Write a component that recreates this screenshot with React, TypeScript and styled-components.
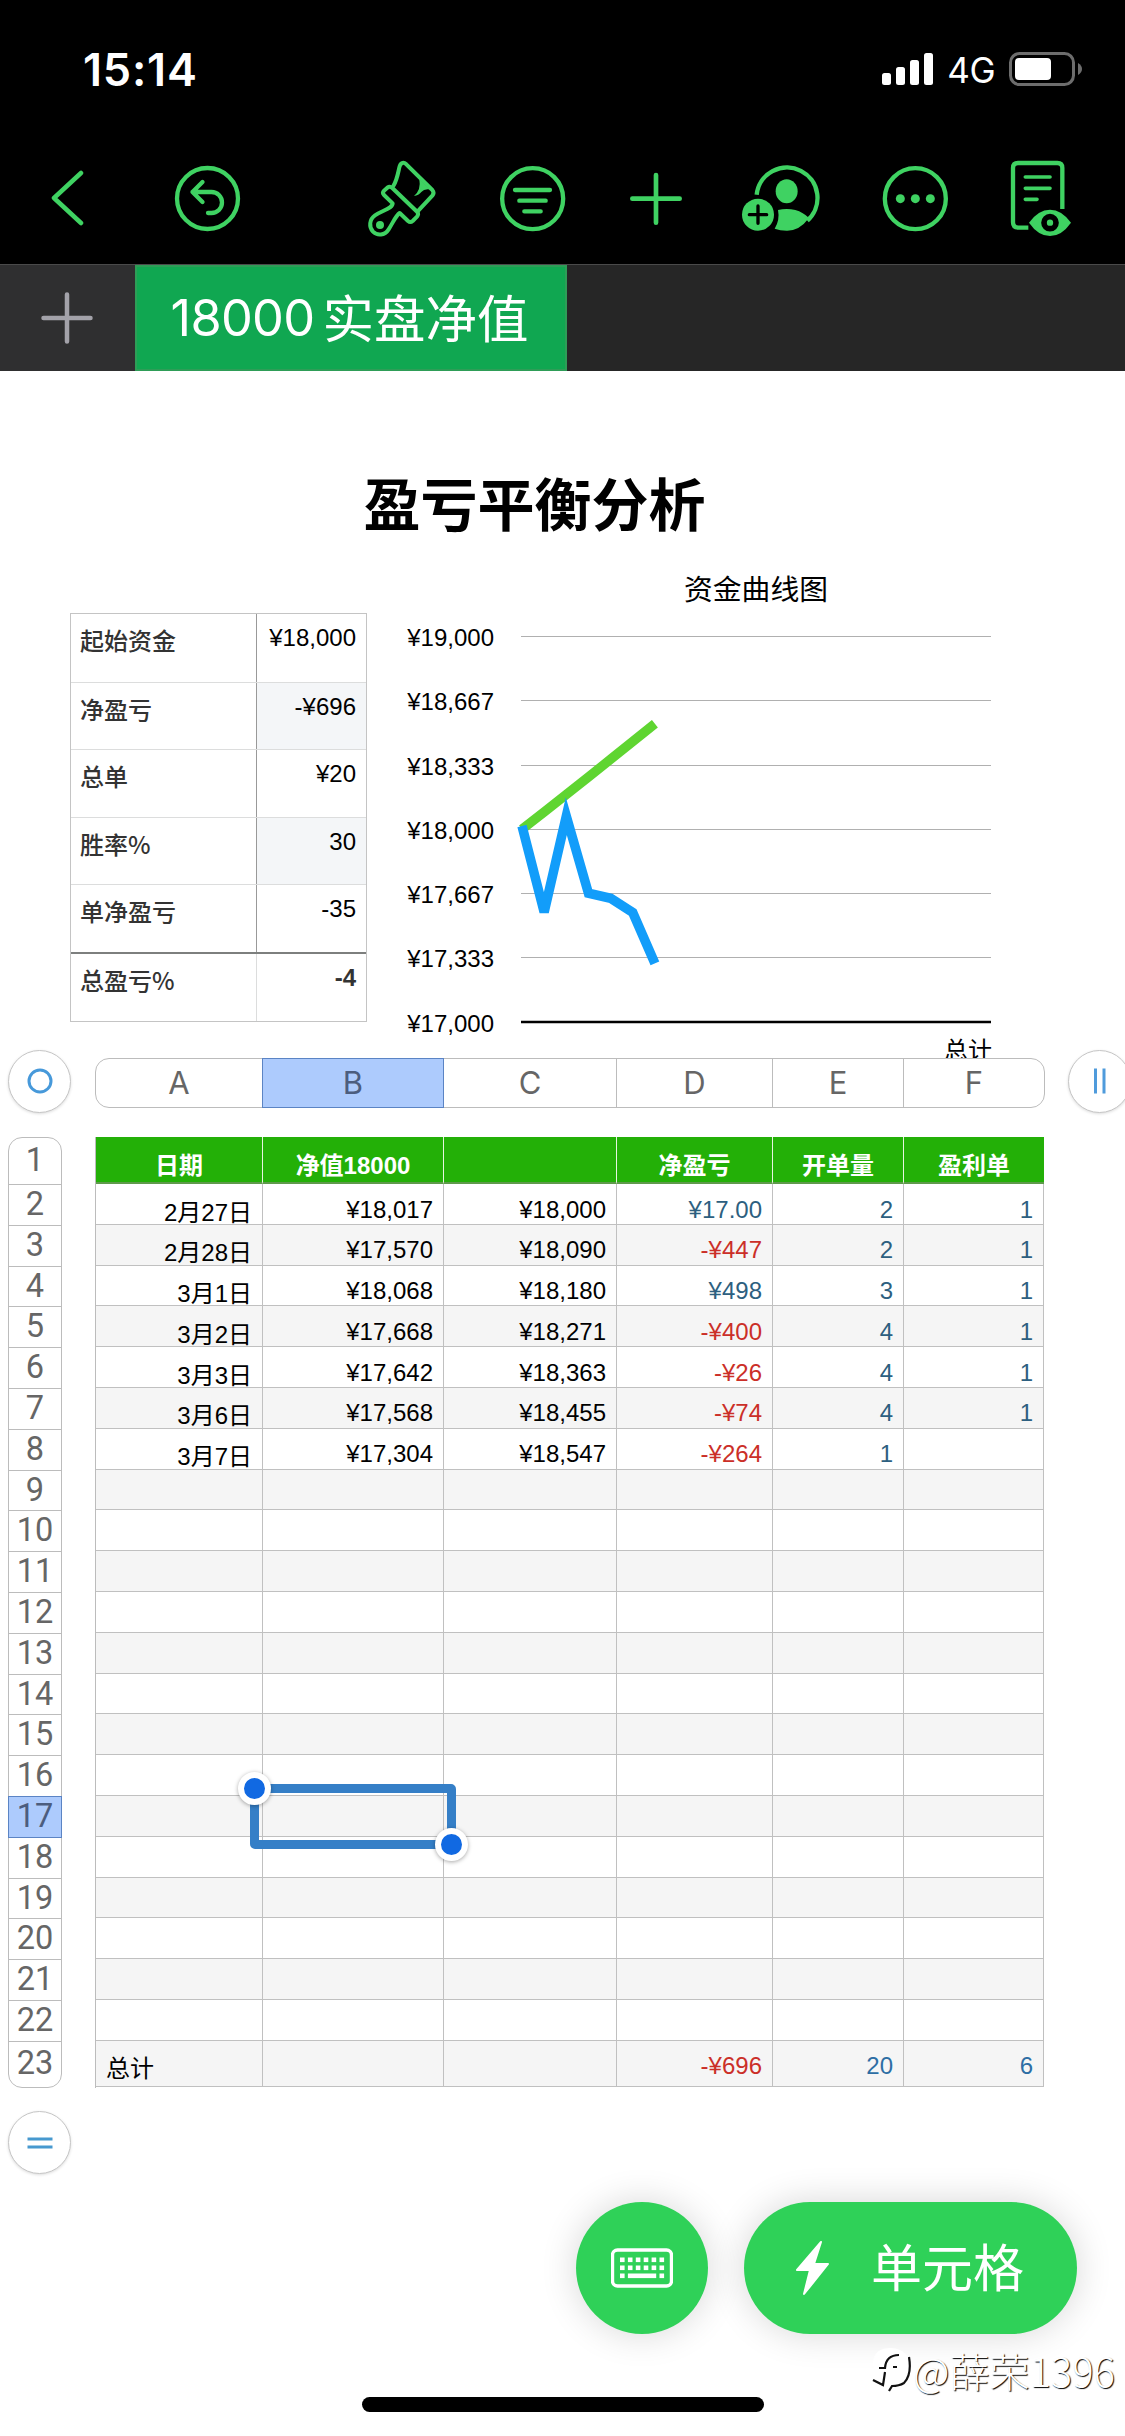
import React from 'react'
import styled, { createGlobalStyle } from 'styled-components'

const GREEN = '#3fd262'

const GlobalStyle = createGlobalStyle`
  * {
    box-sizing: border-box;
  }
  body {
    margin: 0;
    background: #fff;
  }
`

const Screen = styled.div`
  position: relative;
  display: flex;
  flex-direction: column;
  width: 1125px;
  height: 2436px;
  overflow: hidden;
  background: #fff;
  color: #000;
  font-family: 'Liberation Sans', 'Noto Sans CJK SC', sans-serif;
`

const StatusBar = styled.div`
  display: flex;
  align-items: center;
  justify-content: space-between;
  height: 138px;
  padding: 0 42px 0 83px;
  background: #000;
  color: #fff;
  font-family: Inter, sans-serif;
`

const Clock = styled.div`
  font-size: 45px;
  font-weight: 600;
  letter-spacing: 0.8px;
`

const StatusRight = styled.div`
  display: flex;
  align-items: center;
`

const Network = styled.span`
  margin: 2px 14px 0 13px;
  font-size: 35px;
  line-height: 35px;
  letter-spacing: -0.5px;
`

const Toolbar = styled.div`
  display: flex;
  align-items: center;
  height: 126px;
  padding: 0 0 6px 50px;
  background: #000;
`

const ToolButton = styled.button<{ offset?: number }>`
  display: flex;
  flex: none;
  margin: 0 0 0 ${({ offset }) => offset || 0}px;
  padding: 0;
  border: none;
  background: transparent;
  color: ${GREEN};
  & > svg {
    fill: none;
    stroke: currentColor;
    stroke-linecap: round;
    stroke-linejoin: round;
  }
`

const TabBar = styled.div`
  display: flex;
  height: 107px;
  border-top: 1px solid #4a4a4a;
  background: #262626;
`

const AddTab = styled.button`
  display: flex;
  align-items: center;
  justify-content: center;
  width: 135px;
  padding: 0 2px 0 0;
  border: none;
  background: #2f2f30;
`

const Tab = styled.div`
  display: flex;
  align-items: center;
  justify-content: center;
  width: 432px;
  border: 2px solid #2e9d57;
  background: #10a751;
  color: #fff;
  font-family: 'Noto Sans CJK SC', sans-serif;
  font-size: 51.5px;
  line-height: 98px;
  white-space: nowrap;
`

const TabDigits = styled.span`
  margin: 0 8px 0 -3px;
  font-family: Inter, sans-serif;
  font-size: 50.5px;
  font-weight: 400;
  letter-spacing: -0.7px;
`

const TabName = styled.span`
  margin-top: -4px;
`

const Title = styled.h1`
  margin: 100px 0 0;
  padding-right: 56px;
  font-family: 'Noto Sans CJK SC', sans-serif;
  font-size: 57px;
  font-weight: 700;
  line-height: 61px;
  text-align: center;
`

const Overview = styled.section`
  display: flex;
  height: 526.5px;
  padding-top: 2px;
  overflow: hidden;
`

const Summary = styled.div`
  width: 297px;
  height: 409px;
  margin: 79px 0 0 70px;
  border: 1px solid #c4c4c4;
`

const SummaryRow = styled.div<{ total?: boolean }>`
  display: flex;
  height: ${({ total }) => (total ? '69px' : '67.5px')};
  border-top: ${({ total }) => (total ? '2px solid #7d7f7e' : '1px solid #dcdddd')};
  font-weight: ${({ total }) => (total ? 700 : 400)};
  color: ${({ total }) => (total ? '#333' : '#000')};
  &:first-child {
    border-top: none;
  }
`

const SummaryLabel = styled.div<{ total?: boolean }>`
  width: 186px;
  padding: 8px 0 0 9px;
  border-right: 1px solid ${({ total }) => (total ? '#dcdddd' : '#999')};
  color: #333;
  font-family: 'Noto Sans CJK SC', sans-serif;
  font-size: 24px;
  font-weight: 500;
  line-height: 36px;
`

const SummaryValue = styled.div<{ shaded?: boolean }>`
  flex: 1;
  padding: 6px 10px 0 0;
  background: ${({ shaded }) => (shaded ? '#f4f6f8' : 'transparent')};
  font-size: 24px;
  line-height: 36px;
  text-align: right;
`

const Chart = styled.svg`
  flex: none;
  margin: 26px 0 0 33px;
  & text {
    font-family: 'Liberation Sans', 'Noto Sans CJK SC', sans-serif;
    font-size: 24px;
  }
`

const ColumnBar = styled.div`
  display: flex;
  align-items: center;
  height: 62px;
  margin-top: -8.5px;
  padding-left: 8px;
`

const RoundHandle = styled.button`
  position: relative;
  display: flex;
  flex: none;
  align-items: center;
  justify-content: center;
  width: 63px;
  height: 63px;
  padding: 0;
  border: 1px solid #c6c6c6;
  border-radius: 50%;
  background: #fff;
  box-shadow: 0 1px 3px rgba(0, 0, 0, 0.14);
`

const ColumnLetters = styled.div`
  display: flex;
  flex: none;
  width: 950px;
  height: 50px;
  margin: 3px 23px 0 24px;
  position: relative;
  border: 1px solid #bcbcbc;
  border-radius: 14px;
  background: #fff;
`

const ColumnLetter = styled.div<{ w: number; selected?: boolean }>`
  flex: none;
  width: ${({ w }) => w}px;
  margin: ${({ selected }) => (selected ? '-1px 0 -1px -1px' : '0')};
  ${({ selected, w }) => selected && `width: ${w + 1}px;`}
  border-right: 1px solid #bcbcbc;
  ${({ selected }) => selected && 'border: 1px solid #5b84c4;'}
  background: ${({ selected }) => (selected ? '#adcbfd' : 'transparent')};
  color: ${({ selected }) => (selected ? '#4c5d7e' : '#666')};
  font-family: Inter, sans-serif;
  font-size: 31px;
  line-height: 47px;
  text-align: center;
  &:last-child {
    border-right: none;
  }
`

const SheetBody = styled.div`
  display: flex;
  position: relative;
  margin-top: 25px;
`

const RowNumbers = styled.div`
  width: 54px;
  margin: 0 33px 0 8px;
  border: 1px solid #bcbcbc;
  border-radius: 14px;
`

const RowNumber = styled.div<{ h: number; selected?: boolean }>`
  height: ${({ h }) => h}px;
  margin: 0 ${({ selected }) => (selected ? '-1px' : '0')};
  border-bottom: 1px solid ${({ selected }) => (selected ? '#5b84c4' : '#bcbcbc')};
  ${({ selected }) => selected && 'box-shadow: 0 -1px 0 #5b84c4, inset 1px 0 0 #5b84c4, inset -1px 0 0 #5b84c4;'}
  background: ${({ selected }) => (selected ? '#adcbfd' : 'transparent')};
  color: ${({ selected }) => (selected ? '#4c5d7e' : '#666')};
  font-family: Roboto, sans-serif;
  font-size: 32.5px;
  line-height: ${({ h }) => h - 2}px;
  text-align: center;
  &:last-child {
    border-bottom: none;
  }
`

const Table = styled.div`
  width: 949px;
  border-left: 1px solid #bcbcbc;
`

const TableRow = styled.div<{ h: number; shaded?: boolean }>`
  display: flex;
  height: ${({ h }) => h}px;
  background: ${({ shaded }) => (shaded ? '#f5f5f5' : '#fff')};
`

const HeadCell = styled.div<{ w: number }>`
  width: ${({ w }) => w}px;
  padding-top: 12px;
  border-right: 1px solid #e6f5e0;
  border-bottom: 2px solid #5f9a4c;
  background: #23b007;
  color: #fff;
  font-family: 'Liberation Sans', 'Noto Sans CJK SC', sans-serif;
  font-size: 24px;
  font-weight: 700;
  line-height: 34px;
  text-align: center;
  &:last-child {
    border-right: none;
  }
`

const Cell = styled.div<{ w: number; color?: string; left?: boolean; drop?: number }>`
  width: ${({ w }) => w}px;
  padding: ${({ drop }) => drop || 0}px 10px 0;
  border-right: 1px solid #c0c0c0;
  border-bottom: 1px solid #c0c0c0;
  color: ${({ color }) => color || '#000'};
  font-size: 24px;
  line-height: 32px;
  text-align: ${({ left }) => (left ? 'left' : 'right')};
  white-space: nowrap;
`

// floats over the grid, a little larger than the selected cell
const Selection = styled.div`
  position: absolute;
  left: 250px;
  top: 647px;
  width: 206px;
  height: 65px;
  border: 9px solid #357fc7;
  border-radius: 5px;
`

const SelectionHandle = styled.div<{ end?: boolean }>`
  position: absolute;
  ${({ end }) => (end ? 'right: -21px; bottom: -21px;' : 'left: -21px; top: -21px;')}
  width: 33px;
  height: 33px;
  border: 6px solid #fff;
  border-radius: 50%;
  background: #1169e2;
  box-shadow: 0 1px 4px rgba(0, 0, 0, 0.35);
`

const FooterHandle = styled.div`
  height: 62px;
  margin: 23px 0 0 8px;
`

const Actions = styled.div`
  display: flex;
  justify-content: flex-end;
  gap: 36px;
  margin-top: 29px;
  padding-right: 48px;
`

const ActionButton = styled.button<{ wide?: boolean }>`
  display: flex;
  align-items: center;
  justify-content: ${({ wide }) => (wide ? 'flex-start' : 'center')};
  width: ${({ wide }) => (wide ? 333 : 132)}px;
  height: 132px;
  padding: 0 0 0 ${({ wide }) => (wide ? 50 : 0)}px;
  border: none;
  border-radius: 66px;
  background: #2fd158;
  box-shadow: 0 0 36px rgba(0, 0, 0, 0.16);
  color: #fff;
  font-family: 'Noto Sans CJK SC', sans-serif;
  font-size: 51px;
  line-height: 60px;
`

const ActionLabel = styled.span`
  margin: -7px 0 0 41px;
`

const HomeIndicator = styled.div`
  width: 402px;
  height: 15px;
  margin: 63px 0 0 362px;
  border-radius: 8px;
  background: #000;
`

const Watermark = styled.div`
  position: absolute;
  right: 10px;
  top: 2344px;
  display: flex;
  align-items: center;
  color: #fff;
  font-family: 'Noto Sans CJK SC', sans-serif;
  font-size: 40px;
  font-weight: 300;
  line-height: 52px;
  text-shadow: 1px 1px 1px #000;
`

const COLUMNS = [
  { letter: 'A', width: 167 },
  { letter: 'B', width: 181 },
  { letter: 'C', width: 173 },
  { letter: 'D', width: 156 },
  { letter: 'E', width: 131 },
  { letter: 'F', width: 140 },
]

const HEADERS = ['日期', '净值18000', '', '净盈亏', '开单量', '盈利单']

const RECORDS = [
  ['2月27日', '¥18,017', '¥18,000', '¥17.00', '2', '1'],
  ['2月28日', '¥17,570', '¥18,090', '-¥447', '2', '1'],
  ['3月1日', '¥18,068', '¥18,180', '¥498', '3', '1'],
  ['3月2日', '¥17,668', '¥18,271', '-¥400', '4', '1'],
  ['3月3日', '¥17,642', '¥18,363', '-¥26', '4', '1'],
  ['3月6日', '¥17,568', '¥18,455', '-¥74', '4', '1'],
  ['3月7日', '¥17,304', '¥18,547', '-¥264', '1', ''],
]

const TOTALS = ['总计', '', '', '-¥696', '20', '6']

const SUMMARY = [
  { label: '起始资金', value: '¥18,000' },
  { label: '净盈亏', value: '-¥696' },
  { label: '总单', value: '¥20' },
  { label: '胜率%', value: '30' },
  { label: '单净盈亏', value: '-35' },
  { label: '总盈亏%', value: '-4', total: true },
]

const ROW_COUNT = 23
const SELECTED_ROW = 17
const SELECTED_COLUMN = 'B'

const rowHeight = (row: number) => (row === 1 ? 47 : row === ROW_COUNT ? 45.6 : 40.8)

const cellColor = (value: string, column: number, total?: boolean) => {
  if (column < 3) return '#000'
  if (value.startsWith('-')) return '#cb2f28'
  return total ? '#2d6ea4' : '#2d5f80'
}

const AXIS = [19000, 18667, 18333, 18000, 17667, 17333, 17000]
const NET_VALUE = [18017, 17570, 18068, 17668, 17642, 17568, 17304]
const TARGET = [18000, 18090, 18180, 18271, 18363, 18455, 18547]

const chartY = (value: number) => 76.5 + ((19000 - value) / 2000) * 385.5
const chartPoints = (values: number[]) => values.map((v, i) => `${122 + i * 22.15},${chartY(v)}`).join(' ')

function FundChart() {
  return (
    <Chart width="640" height="499" viewBox="0 0 640 499">
      <text x="356" y="39.500" textAnchor="middle" style={{ fontSize: 28.8 }}>
        资金曲线图
      </text>
      {AXIS.map((value) => (
        <g key={value}>
          <text x="94" y={chartY(value) + 9.5} textAnchor="end">
            ¥{value.toLocaleString('en-US')}
          </text>
          <line
            x1="121"
            x2="591"
            y1={Math.floor(chartY(value)) + (value === 17000 ? 0 : 0.5)}
            y2={Math.floor(chartY(value)) + (value === 17000 ? 0 : 0.5)}
            stroke={value === 17000 ? '#000' : '#b0b0b0'}
            strokeWidth={value === 17000 ? 2.4 : 1}
          />
        </g>
      ))}
      <polyline points={chartPoints(TARGET)} fill="none" stroke="#5fd531" strokeWidth="9.5" />
      <polyline
        points={chartPoints(NET_VALUE)}
        fill="none"
        stroke="#129dfa"
        strokeWidth="9.5"
        strokeLinejoin="miter"
        strokeMiterlimit="4.1"
      />
      <text x="592" y="498.500" textAnchor="end">
        总计
      </text>
    </Chart>
  )
}

function StatusIcons() {
  return (
    <StatusRight>
      <svg width="52" height="33" viewBox="0 0 52 33" fill="#fff">
        <rect x="0" y="20" width="9" height="12" rx="2.5" />
        <rect x="14" y="14" width="9" height="18" rx="2.5" />
        <rect x="28" y="7" width="9" height="25" rx="2.5" />
        <rect x="42" y="0" width="9" height="32" rx="2.5" />
      </svg>
      <Network>4G</Network>
      <svg width="74" height="34" viewBox="0 0 74 34">
        <rect x="1.5" y="1.5" width="63" height="31" rx="9" fill="none" stroke="#6d6d6d" strokeWidth="3" />
        <rect x="6" y="6" width="36" height="22" rx="4" fill="#fff" />
        <path d="M69 11 Q73 13.500 73 17 Q73 20.500 69 23 Z" fill="#6d6d6d" />
      </svg>
    </StatusRight>
  )
}

function ToolbarIcons() {
  return (
    <Toolbar>
      <ToolButton aria-label="back">
        <svg width="34" height="80" viewBox="0 0 34 80" strokeWidth="4.500">
          <path d="M31 15 L4 40 L31 65" />
        </svg>
      </ToolButton>
      <ToolButton offset={90} aria-label="undo">
        <svg width="67" height="80" viewBox="0 0 67 80" strokeWidth="4.300">
          <circle cx="33.500" cy="40.500" r="30.500" />
          <path d="M28.500 24 L18.500 34 L28.500 44 M18.500 34 H37.500 A10.500 10.500 0 0 1 37.500 55 H34" />
        </svg>
      </ToolButton>
      <ToolButton offset={126} aria-label="format">
        <svg width="71" height="80" viewBox="81 54 213 240" strokeWidth="12">
          <path d="M160 138 C171 120 174 100 178 82 C181 68 190 65 199 73 L277 150 Q284 158 277 167 L235 212" />
          <path d="M158 190 L132 165 Q126 158 132 152 L142 143 Q150 137 157 144 L232 216 Q237 223 231 230 L218 243 Q211 249 204 243 L179 219 C168 226 160 246 146 268 C134 287 112 288 99 275 C86 261 88 238 105 226 C130 210 158 205 158 190 Z" />
          <circle cx="120" cy="255" r="12" fill="currentColor" stroke="none" />
          <path d="M238 118 L268 148 Q252 146 244 156 Q236 167 222 168 Q244 150 238 118 Z" fill="currentColor" stroke="none" />
        </svg>
      </ToolButton>
      <ToolButton offset={61} aria-label="organize">
        <svg width="67" height="80" viewBox="477 54 201 240" strokeWidth="13">
          <circle cx="578" cy="176" r="91.500" />
          <path d="M525 150 H630 M538 182 H617 M553 214 H602" />
        </svg>
      </ToolButton>
      <ToolButton offset={64} aria-label="insert">
        <svg width="52" height="80" viewBox="870 54 156 240" strokeWidth="14">
          <path d="M877 176 H1019 M948 105 V248" />
        </svg>
      </ToolButton>
      <ToolButton offset={58} aria-label="collaborate">
        <svg width="80" height="80" viewBox="60 54 240 240" strokeWidth="13">
          <path d="M110 164 A91.500 91.500 0 1 1 262 242" strokeLinecap="butt" />
          <ellipse cx="200" cy="154" rx="33" ry="36" fill="currentColor" stroke="none" />
          <path
            d="M174 210 Q200 204 226 210 Q250 217 267 234 Q238 273 200 272 Q180 272 164 266 Q180 240 174 210 Z"
            fill="currentColor"
            stroke="none"
          />
          <circle cx="114" cy="224" r="48" fill="currentColor" stroke="none" />
          <path d="M88 224 H140 M114 198 V250" stroke="#000" strokeWidth="10" />
        </svg>
      </ToolButton>
      <ToolButton offset={62} aria-label="more">
        <svg width="67" height="80" viewBox="486 54 201 240" strokeWidth="13">
          <circle cx="586" cy="176" r="91.500" />
          <g fill="currentColor" stroke="none">
            <circle cx="541" cy="176" r="13.500" />
            <circle cx="586" cy="176" r="13.500" />
            <circle cx="631" cy="176" r="13.500" />
          </g>
        </svg>
      </ToolButton>
      <ToolButton offset={61} aria-label="view">
        <svg width="64" height="80" viewBox="870 54 192 240" strokeWidth="13">
          <path d="M1027 207 V84 Q1027 69 1012 69 H894 Q879 69 879 84 V247 Q879 263 895 263 H925" strokeLinecap="butt" />
          <path d="M916 111 H990 M916 145 H990 M916 178 H951" strokeWidth="11" />
          <path
            d="M927 248 Q955 209 990 209 Q1025 209 1053 248 Q1025 288 990 288 Q955 288 927 248 Z"
            fill="currentColor"
            stroke="none"
          />
          <circle cx="990" cy="248" r="18" fill="currentColor" stroke="#000" strokeWidth="17" />
        </svg>
      </ToolButton>
    </Toolbar>
  )
}

function KeyboardIcon() {
  const keys = [0, 1, 2, 3, 4, 5]
  return (
    <svg width="62" height="40" viewBox="0 0 62 40" fill="#fff">
      <rect x="1.500" y="2" width="59" height="36" rx="5" fill="none" stroke="#fff" strokeWidth="3.400" />
      {keys.map((k) => (
        <React.Fragment key={k}>
          <rect x={9 + k * 7.9} y="9.500" width="4.600" height="4.600" />
          <rect x={9 + k * 7.9} y="17.500" width="4.600" height="4.600" />
        </React.Fragment>
      ))}
      <rect x="9" y="25.500" width="4.600" height="4.600" />
      <rect x="16.900" y="25.500" width="28.300" height="4.600" />
      <rect x="48.500" y="25.500" width="4.600" height="4.600" />
    </svg>
  )
}

export default function App() {
  const rows = Array.from({ length: ROW_COUNT }, (_, i) => i + 1)

  return (
    <>
      <GlobalStyle />
      <Screen>
        <StatusBar>
          <Clock>15:14</Clock>
          <StatusIcons />
        </StatusBar>
        <ToolbarIcons />
        <TabBar>
          <AddTab aria-label="add sheet">
            <svg width="52" height="52" viewBox="0 0 52 52" stroke="#a3a2a9" strokeWidth="4.500" strokeLinecap="round">
              <path d="M2.500 26 H49.500 M26 2.500 V49.500" />
            </svg>
          </AddTab>
          <Tab>
            <TabDigits>18000</TabDigits>
            <TabName>实盘净值</TabName>
          </Tab>
        </TabBar>

        <Title>盈亏平衡分析</Title>
        <Overview>
          <Summary>
            {SUMMARY.map(({ label, value, total }, i) => (
              <SummaryRow key={label} total={total}>
                <SummaryLabel total={total}>{label}</SummaryLabel>
                <SummaryValue shaded={i === 1 || i === 3}>{value}</SummaryValue>
              </SummaryRow>
            ))}
          </Summary>
          <FundChart />
        </Overview>

        <ColumnBar>
          <RoundHandle aria-label="move table">
            <svg width="26" height="26" viewBox="0 0 26 26">
              <circle cx="13" cy="13" r="11" fill="none" stroke="#4799da" strokeWidth="3" />
            </svg>
          </RoundHandle>
          <ColumnLetters>
            {COLUMNS.map(({ letter, width }) => (
              <ColumnLetter key={letter} w={width} selected={letter === SELECTED_COLUMN}>
                {letter}
              </ColumnLetter>
            ))}
          </ColumnLetters>
          <RoundHandle aria-label="add column">
            <svg width="26" height="26" viewBox="0 0 26 26" stroke="#4f9bdc" strokeWidth="3">
              <path d="M8.500 0.500 V25.500 M17 0.500 V25.500" />
            </svg>
          </RoundHandle>
        </ColumnBar>

        <SheetBody>
          <RowNumbers>
            {rows.map((row) => (
              <RowNumber key={row} h={rowHeight(row)} selected={row === SELECTED_ROW}>
                {row}
              </RowNumber>
            ))}
          </RowNumbers>
          <Table>
            {rows.map((row) => {
              if (row === 1) {
                return (
                  <TableRow key={row} h={rowHeight(row)}>
                    {HEADERS.map((text, i) => (
                      <HeadCell key={i} w={COLUMNS[i].width}>
                        {text}
                      </HeadCell>
                    ))}
                  </TableRow>
                )
              }
              const total = row === ROW_COUNT
              const values = total ? TOTALS : RECORDS[row - 2] || []
              return (
                <TableRow key={row} h={rowHeight(row) + (total ? 1 : 0)} shaded={row % 2 === 1}>
                  {COLUMNS.map(({ letter, width }, i) => {
                    const value = values[i] || ''
                    return (
                      <Cell
                        key={letter}
                        w={width}
                        color={cellColor(value, i, total)}
                        left={total && i === 0}
                        drop={i === 0 ? 12.5 : 9.5}
                      >
                        {value}
                      </Cell>
                    )
                  })}
                </TableRow>
              )
            })}
          </Table>
          <Selection>
            <SelectionHandle />
            <SelectionHandle end />
          </Selection>
        </SheetBody>

        <FooterHandle>
          <RoundHandle aria-label="add row">
            <svg width="26" height="26" viewBox="0 0 26 26" stroke="#4799cf" strokeWidth="3">
              <path d="M0.500 9 H25.500 M0.500 17 H25.500" />
            </svg>
          </RoundHandle>
        </FooterHandle>

        <Actions>
          <ActionButton aria-label="keyboard">
            <KeyboardIcon />
          </ActionButton>
          <ActionButton wide>
            <svg width="36" height="56" viewBox="0 0 36 56" fill="#fff" stroke="#fff" strokeWidth="2" strokeLinejoin="round">
              <path d="M27 2 L3 30 H16 L10 54 L34 24 H20 Z" />
            </svg>
            <ActionLabel>单元格</ActionLabel>
          </ActionButton>
        </Actions>
        <HomeIndicator />

        <Watermark>
          <svg width="42" height="50" viewBox="0 0 42 50" fill="none">
            <path d="M2 16 Q4 3 20 3 Q39 4 40 24 Q40 38 24 42 L18 48 L4 36 Z" fill="#fff" />
            <path
              d="M8 23 H14 Q15 10 28 10 M22 22 H26 M14 27 Q13 34 12 40 L2 35 M38 12 Q41 30 33 38 Q28 41 21 41 L18 46"
              stroke="#111"
              strokeWidth="2.200"
            />
          </svg>
          @薛荣1396
        </Watermark>
      </Screen>
    </>
  )
}
